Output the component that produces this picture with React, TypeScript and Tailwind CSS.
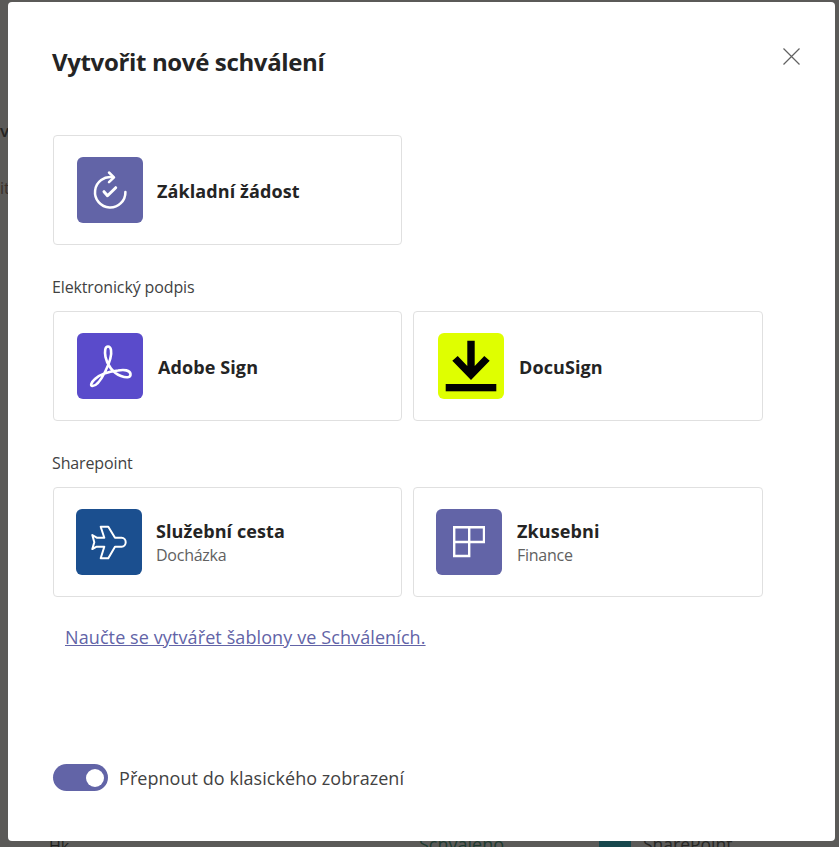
const font = "font-['Open_Sans','Noto_Sans',sans-serif]";

function ApprovalIcon() {
  return (
    <svg width="66" height="66" viewBox="0 0 66 66" fill="none" stroke="#fff" strokeWidth="2.5" strokeLinecap="round" strokeLinejoin="round">
      <path d="M32 15.5 L37 20.3 L32 25.2" />
      <path d="M36 20.4 A15.2 15.2 0 1 0 48.4 35" />
      <path d="M27 34.7 L30.5 38.7 L38.7 30.7" strokeWidth="3" />
    </svg>
  );
}

function AdobeIcon() {
  return (
    <svg width="66" height="66" viewBox="0 0 66 66" fill="none" stroke="#fff" strokeWidth="2.6" strokeLinejoin="round" strokeLinecap="round">
      <path d="M31 13.5 C28 13.5 27.5 18 28.5 24 C30 32 36 40 44 43 C49 45 54 45 53.5 41 C53 37 47 36.5 41 37.5 C32 38.5 23 41 18 46 C14 49.5 13 53 15.5 53 C19 53 24 47 28 39 C32 31 35 22 34 17 C33.5 14.5 32.5 13.5 31 13.5 Z" />
    </svg>
  );
}

function DownloadIcon() {
  return (
    <svg width="66" height="66" viewBox="0 0 66 66" fill="#000">
      <rect x="7.7" y="51" width="50.6" height="7.3" />
      <path d="M29.3 7.7 H36.7 V33 L46.3 23 L51.7 27.7 L33 47 L14.3 27.7 L19.7 23 L29.3 33 Z" />
    </svg>
  );
}

function PlaneIcon() {
  return (
    <svg width="36" height="36" viewBox="0 0 36 36" fill="none" stroke="#fff" strokeWidth="2" strokeLinejoin="round">
      <path d="M9.7 2.7 H17.3 L24 13.7 H30.7 C33 13.7 34.7 16 34.7 18.3 C34.7 20.6 33 22.7 30.7 22.7 H24 L17.3 34.3 H9.7 L13.3 22.7 H5.7 L1.3 25 L3.3 18.3 L1.3 11 L5.7 13.7 H13.3 Z" />
    </svg>
  );
}

function GridIcon() {
  return (
    <svg width="32" height="32" viewBox="0 0 32 32" fill="none" stroke="#fff" strokeWidth="2.4">
      <path d="M1.2 1.2 H31 V16 H16.2 V30 H1.2 Z" />
      <path d="M16.2 1.2 V16 H1.2" />
    </svg>
  );
}

type CardProps = {
  title: string;
  subtitle?: string;
  iconBg: string;
  icon: React.ReactNode;
  className: string;
};

function Card({ title, subtitle, iconBg, icon, className }: CardProps) {
  return (
    <div className={`flex h-[110px] items-center rounded-[4px] border border-[#e0e0e0] bg-white ${className}`}>
      <div className={`flex h-[66px] w-[66px] shrink-0 items-center justify-center rounded-[6px] ${iconBg}`}>{icon}</div>
      <div className="min-w-0 pt-[1px]">
        <div className="text-[18px] leading-[24px] font-bold tracking-[0.1px] text-[#242424]">{title}</div>
        {subtitle && <div className="text-[16px] leading-[24px] tracking-[-0.25px] text-[#616161]">{subtitle}</div>}
      </div>
    </div>
  );
}

export default function App() {
  return (
    <div className={`relative h-[847px] w-[839px] overflow-hidden bg-[#5b5a58] ${font}`}>
      {/* blurred page behind the dialog */}
      <span className="absolute top-[836px] left-[49px] text-[16px] leading-[20px] text-[#1f1f1d]">Hk</span>
      <span className="absolute top-[834px] left-[419px] text-[18px] leading-[20px] text-[#1f3b30]">Schváleno</span>
      <span className="absolute top-[838px] left-[599px] h-[10px] w-[32px] bg-[#17474d]" />
      <span className="absolute top-[834px] left-[643px] text-[17.5px] leading-[20px] text-[#262624]">SharePoint</span>
      <span className="absolute top-[119px] left-0 text-[17px] leading-[24px] font-semibold text-[#242322]">v</span>
      <span className="absolute top-[176px] left-0 text-[16px] leading-[24px] text-[#3a2f28]">it</span>

      <div className="absolute top-[2px] left-[8px] flex h-[839px] w-[827px] flex-col rounded-[4px] bg-white pt-[42px] pr-[72px] pl-[45px]">
        <div className="-ml-[1px] flex h-[36px] items-center">
          <h1 className="text-[24px] leading-[36px] font-bold tracking-[-0.35px] text-[#242424]">Vytvořit nové schválení</h1>
        </div>
        {/* close sits over the header corner */}
        <button className="absolute top-[46px] right-[35px] h-[17px] w-[17px] text-[#616161]" aria-label="Zavřít">
          <svg width="17" height="17" viewBox="0 0 17 17" stroke="currentColor" strokeWidth="1.2">
            <path d="M0.5 0.5 L16.5 16.5 M16.5 0.5 L0.5 16.5" />
          </svg>
        </button>

        <div className="mt-[55px] grid w-[710px] grid-cols-[349px_350px] gap-x-[11px]">
          <Card title="Základní žádost" iconBg="bg-[#6264a7]" icon={<ApprovalIcon />} className="gap-[14px] pl-[23px]" />
        </div>

        <div className="mt-[31px] -ml-[1px] text-[16px] leading-[22px] tracking-[-0.13px] text-[#424242]">Elektronický podpis</div>
        <div className="mt-[13px] grid w-[710px] grid-cols-[349px_350px] gap-x-[11px]">
          <Card title="Adobe Sign" iconBg="bg-[#5a4bcb]" icon={<AdobeIcon />} className="gap-[15px] pl-[23px]" />
          <Card title="DocuSign" iconBg="bg-[#dfff00]" icon={<DownloadIcon />} className="gap-[15px] pl-[24px]" />
        </div>

        <div className="mt-[31px] -ml-[1px] text-[16px] leading-[22px] tracking-[-0.13px] text-[#424242]">Sharepoint</div>
        <div className="mt-[13px] grid w-[710px] grid-cols-[349px_350px] gap-x-[11px]">
          <Card title="Služební cesta" subtitle="Docházka" iconBg="bg-[#1b4f8f]" icon={<PlaneIcon />} className="gap-[14px] pl-[22px]" />
          <Card title="Zkusebni" subtitle="Finance" iconBg="bg-[#6264a7]" icon={<GridIcon />} className="gap-[15px] pl-[22px]" />
        </div>

        <a href="#" className="mt-[28px] ml-[12px] text-[18px] leading-[24px] tracking-[0.1px] text-[#6264a7] underline">
          Naučte se vytvářet šablony ve Schváleních.
        </a>

        <div className="mt-auto mb-[50px] flex items-center gap-[11px]">
          <div className="flex h-[27px] w-[55px] items-center justify-end rounded-full bg-[#6264a7] pr-[4px]">
            <div className="h-[18px] w-[18px] rounded-full bg-white" />
          </div>
          <span className="text-[18px] leading-[26px] tracking-[0.05px] text-[#424242]">Přepnout do klasického zobrazení</span>
        </div>
      </div>
    </div>
  );
}
